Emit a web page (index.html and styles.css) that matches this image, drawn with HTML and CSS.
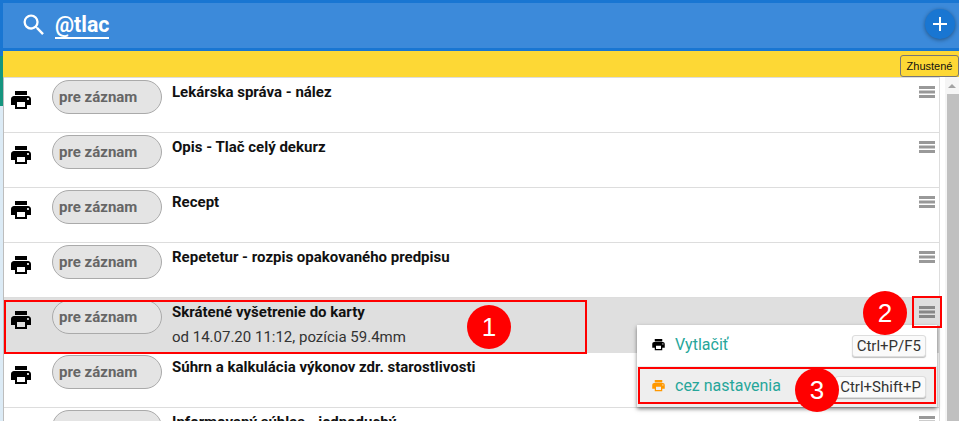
FILE: index.html
```html
<!DOCTYPE html>
<html lang="sk">
<head>
    <meta charset="UTF-8">
    <meta name="viewport" content="width=device-width, initial-scale=1.0">
    <title>@tlac</title>
    <link rel="stylesheet" href="styles.css">
</head>
<body>
    <svg class="defs" width="0" height="0">
        <symbol id="printer" viewBox="0 0 24 24"><path d="M19 8H5c-1.66 0-3 1.34-3 3v6h4v4h12v-4h4v-6c0-1.66-1.34-3-3-3zm-3 11H8v-5h8v5zm3-7c-.55 0-1-.45-1-1s.45-1 1-1 1 .45 1 1-.45 1-1 1zm-1-9H6v4h12V3z"/></symbol>
        <symbol id="menu" viewBox="0 0 16 12"><path d="M0 0h16v3H0zM0 4.5h16v3H0zM0 9h16v3H0z"/></symbol>
    </svg>

    <div class="page">
        <header class="search-head">
            <svg class="search-icon" viewBox="0 0 24 24"><path d="M15.5 14h-.79l-.28-.27A6.47 6.47 0 0 0 16 9.5 6.5 6.5 0 1 0 9.5 16c1.61 0 3.09-.59 4.23-1.57l.27.28v.79l5 4.99L20.49 19l-4.99-5zm-6 0C7.01 14 5 11.99 5 9.5S7.01 5 9.5 5 14 7.01 14 9.5 11.99 14 9.5 14z"/></svg>
            <span class="search-text">@tlac</span>
            <button class="add-btn"><svg viewBox="0 0 24 24"><path d="M19 13h-6v6h-2v-6H5v-2h6V5h2v6h6v2z"/></svg></button>
        </header>

        <div class="filter-bar">
            <button class="dense-btn">Zhustené</button>
        </div>

        <div class="content">
            <ul class="list">
                <li class="row">
                    <svg class="row-print"><use href="#printer"/></svg>
                    <span class="pill">pre záznam</span>
                    <div class="row-text"><b>Lekárska správa - nález</b></div>
                    <svg class="row-menu"><use href="#menu"/></svg>
                </li>
                <li class="row">
                    <svg class="row-print"><use href="#printer"/></svg>
                    <span class="pill">pre záznam</span>
                    <div class="row-text"><b>Opis - Tlač celý dekurz</b></div>
                    <svg class="row-menu"><use href="#menu"/></svg>
                </li>
                <li class="row">
                    <svg class="row-print"><use href="#printer"/></svg>
                    <span class="pill">pre záznam</span>
                    <div class="row-text"><b>Recept</b></div>
                    <svg class="row-menu"><use href="#menu"/></svg>
                </li>
                <li class="row">
                    <svg class="row-print"><use href="#printer"/></svg>
                    <span class="pill">pre záznam</span>
                    <div class="row-text"><b>Repetetur - rozpis opakovaného predpisu</b></div>
                    <svg class="row-menu"><use href="#menu"/></svg>
                </li>
                <li class="row row-active">
                    <svg class="row-print"><use href="#printer"/></svg>
                    <span class="pill">pre záznam</span>
                    <div class="row-text"><b>Skrátené vyšetrenie do karty</b><span class="row-sub">od 14.07.20 11:12, pozícia 59.4mm</span></div>
                    <svg class="row-menu"><use href="#menu"/></svg>
                </li>
                <li class="row">
                    <svg class="row-print"><use href="#printer"/></svg>
                    <span class="pill">pre záznam</span>
                    <div class="row-text"><b>Súhrn a kalkulácia výkonov zdr. starostlivosti</b></div>
                    <svg class="row-menu"><use href="#menu"/></svg>
                </li>
                <li class="row">
                    <svg class="row-print"><use href="#printer"/></svg>
                    <span class="pill">pre záznam</span>
                    <div class="row-text"><b>Informovaný súhlas - jednoduchý</b></div>
                    <svg class="row-menu"><use href="#menu"/></svg>
                </li>
            </ul>
            <div class="scrollbar"><div class="scroll-up"></div><div class="scroll-thumb"></div></div>

            <!-- kontextove menu -->
            <div class="popup">
                <div class="popup-item">
                    <svg class="popup-icon"><use href="#printer"/></svg>
                    <span class="popup-label">Vytlačiť</span>
                    <kbd class="key">Ctrl+P/F5</kbd>
                </div>
                <div class="popup-item popup-item-hover">
                    <svg class="popup-icon popup-icon-orange"><use href="#printer"/></svg>
                    <span class="popup-label">cez nastavenia</span>
                    <kbd class="key">Ctrl+Shift+P</kbd>
                </div>
            </div>
        </div>

        <!-- anotacie -->
        <div class="mark mark-row"></div>
        <div class="mark mark-menu"></div>
        <div class="mark mark-item"></div>
        <div class="badge badge-1">1</div>
        <div class="badge badge-2">2</div>
        <div class="badge badge-3">3</div>
    </div>
</body>
</html>
```

FILE: styles.css
```css
* {
    box-sizing: border-box;
}

html, body {
    margin: 0;
    padding: 0;
    height: 100%;
    overflow: hidden;
}

body {
    font-family: Roboto, "Liberation Sans", sans-serif;
    background-color: #fff;
}

.defs {
    position: absolute;
}

.page {
    position: relative;
    width: 959px;
    height: 421px;
    overflow: hidden;
    padding-left: 3px;
    background: linear-gradient(#1976d2 56px, #15957f 56px, #15957f 106px, #dcebf6 106px);
}

.search-head {
    display: flex;
    align-items: center;
    height: 51px;
    margin-left: -3px;
    padding: 0 0 0 3px;
    background-color: #3c8ada;
    background-clip: padding-box;
    border-top: 3px solid #1976d2;
    border-bottom: 3px solid #1976d2;
    box-shadow: inset 3px 0 0 #1976d2;
}

.search-icon {
    width: 28px;
    height: 28px;
    margin-left: 17px;
    margin-bottom: 1px;
    fill: #fff;
}

.search-text {
    margin-left: 7px;
    font-size: 21.3px;
    font-weight: 700;
    line-height: 25px;
    color: #fff;
    border-bottom: 2px solid #fff;
}

.add-btn {
    display: flex;
    align-items: center;
    justify-content: center;
    width: 30px;
    height: 30px;
    margin-left: auto;
    margin-right: 4px;
    margin-bottom: 3px;
    padding: 0;
    border: none;
    border-radius: 50%;
    background-color: #1976d2;
    box-shadow: 0 1px 4px rgba(0, 0, 0, 0.4);
}

.add-btn svg {
    width: 24px;
    height: 24px;
    fill: #fff;
}

.filter-bar {
    display: flex;
    justify-content: flex-end;
    align-items: flex-end;
    height: 26px;
    background-color: #fdd835;
}

.dense-btn {
    height: 22px;
    width: 59px;
    padding: 0;
    font-family: "Liberation Sans", sans-serif;
    font-size: 11px;
    color: #111;
    background-color: #fdd835;
    border: 1px solid #777;
    border-radius: 3px;
}

.content {
    position: relative;
    display: flex;
    height: 344px;
    background-color: #fff;
}

.list {
    width: 937px;
    margin: 0;
    padding: 0;
    list-style: none;
    border-left: 1px solid #bdbdbd;
    border-right: 1px solid #ddd;
}

.row {
    display: flex;
    align-items: flex-start;
    height: 55px;
    border-bottom: 1px solid #ddd;
}

.row:first-child {
    height: 56px;
    border-top: 1px solid #ddd;
}

.row-active {
    background-color: #dfdfdf;
    border-bottom: none;
}

.row-print {
    flex: none;
    width: 24px;
    height: 24px;
    margin: 10px 0 0 5px;
}

.pill {
    flex: none;
    width: 110px;
    height: 34px;
    margin: 2px 0 0 19px;
    padding-left: 6px;
    font-size: 15px;
    font-weight: 700;
    line-height: 32px;
    color: #666;
    background-color: #e4e4e4;
    border: 1px solid #aaa;
    border-radius: 17px;
}

.row-text {
    flex: 1;
    margin: 5px 0 0 10px;
    font-size: 15px;
    line-height: 18px;
    color: #111;
}

.row-text b {
    display: block;
}

.row-sub {
    display: block;
    margin-top: 7px;
    color: #333;
}

.row-menu {
    flex: none;
    width: 16px;
    height: 12px;
    margin: 8px 4px 0 0;
    fill: #999;
}

.row-active .row-menu {
    fill: #888;
}

.scrollbar {
    width: 14px;
    margin-left: 5px;
    background-color: #f5f5f5;
}

.scroll-up {
    height: 17px;
    padding-top: 7px;
}

.scroll-up::before {
    content: "";
    display: block;
    width: 0;
    margin: 0 auto;
    border-left: 4px solid transparent;
    border-right: 4px solid transparent;
    border-bottom: 4px solid #a3a3a3;
}

.scroll-thumb {
    height: 100%;
    margin-left: 2px;
    background-color: #c0c0c0;
}

.popup {
    position: absolute;
    top: 248px;
    left: 634px;
    width: 300px;
    background-color: #fff;
    box-shadow: 0 2px 4px rgba(0, 0, 0, 0.5);
}

.popup-item {
    display: flex;
    align-items: center;
    height: 41px;
    padding: 0 11px 2px 14px;
}

.popup-item-hover {
    background-color: #eee;
}

.popup-icon {
    width: 15px;
    height: 15px;
}

.popup-icon-orange {
    fill: #ff9800;
}

.popup-label {
    margin-left: 9px;
    font-size: 16px;
    color: #26a69a;
}

.key {
    margin-left: auto;
    margin-top: 3px;
    padding: 1px 4px;
    font-family: Roboto, "Liberation Sans", sans-serif;
    font-size: 15px;
    line-height: 18px;
    color: #333;
    background-color: #fafafa;
    border: 1px solid #ddd;
    border-radius: 3px;
    box-shadow: 0 1px 1px rgba(0, 0, 0, 0.25);
}

.mark {
    position: absolute;
    border: 2px solid #f00;
}

.mark-row {
    top: 300px;
    left: 4px;
    width: 583px;
    height: 54px;
}

.mark-menu {
    top: 296px;
    left: 912px;
    width: 30px;
    height: 32px;
}

.mark-item {
    top: 367px;
    left: 638px;
    width: 298px;
    height: 37px;
}

.badge {
    position: absolute;
    width: 44px;
    height: 44px;
    font-family: "Liberation Sans", sans-serif;
    font-size: 26px;
    line-height: 44px;
    text-align: center;
    color: #fff;
    background-color: #f00;
    border-radius: 50%;
}

.badge-1 {
    top: 305px;
    left: 467px;
}

.badge-2 {
    top: 291px;
    left: 863px;
}

.badge-3 {
    top: 368px;
    left: 795px;
}
```
